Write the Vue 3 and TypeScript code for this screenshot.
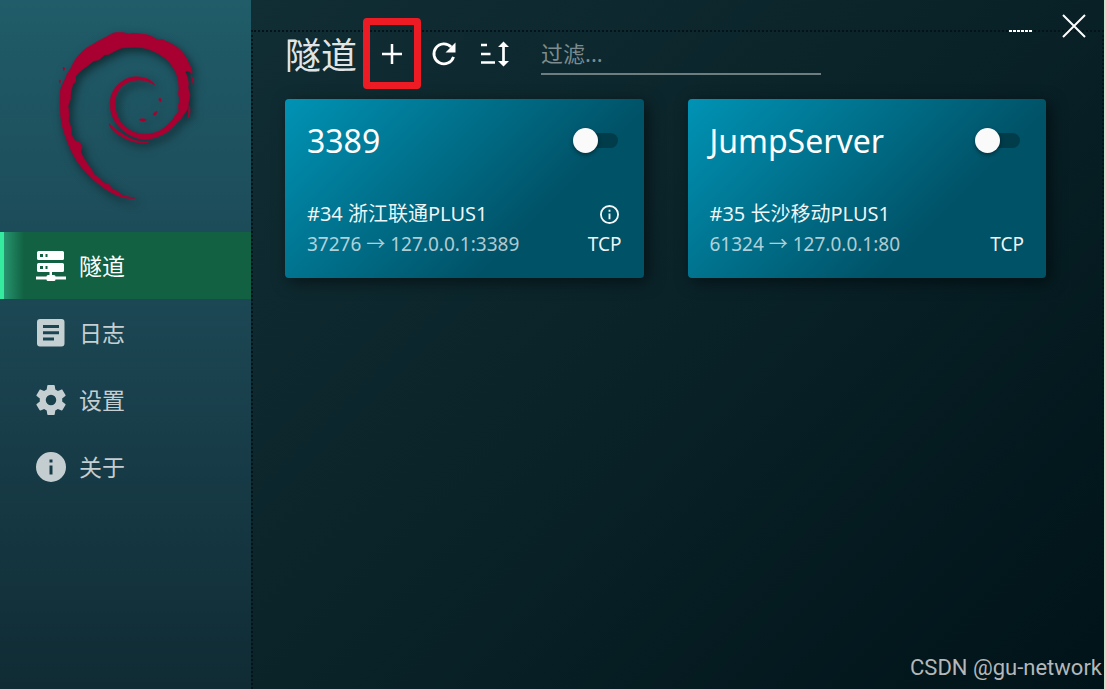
<script setup lang="ts">
import { ref } from 'vue'

interface NavItem {
  id: string
  label: string
}

interface Tunnel {
  id: number
  name: string
  node: string
  route: string
  protocol: string
  info: boolean
  enabled: boolean
}

const navItems: NavItem[] = [
  { id: 'tunnel', label: '隧道' },
  { id: 'log', label: '日志' },
  { id: 'settings', label: '设置' },
  { id: 'about', label: '关于' },
]

const active = ref('tunnel')
const filter = ref('')

const tunnels = ref<Tunnel[]>([
  { id: 34, name: '3389', node: '#34 浙江联通PLUS1', route: '37276 → 127.0.0.1:3389', protocol: 'TCP', info: true, enabled: false },
  { id: 35, name: 'JumpServer', node: '#35 长沙移动PLUS1', route: '61324 → 127.0.0.1:80', protocol: 'TCP', info: false, enabled: false },
])
</script>

<template>
  <div class="window">
    <aside class="sidebar">
      <div class="brand">
        <svg class="swirl" viewBox="0 0 510 570" aria-hidden="true">
          <path d="M282 534C262 538 236 531 214 519C182 503 150 474 124 445C97 413 77 366 65 322C56 286 57 244 58 214C60 199 69 189 75 171C79 157 89 150 94 136C107 107 132 84 152 76C171 62 192 54 214 41C224 36 237 38 248 38L262 42L277 40L306 43C324 44 334 50 350 60L366 59C381 68 392 69 404 79C423 93 436 110 444 131C450 142 454 151 453 162C446 153 438 151 432 156C440 169 444 187 441 203L447 225C444 239 442 253 440 267C434 277 425 286 419 298C406 306 398 321 387 329C366 346 338 357 311 358C284 356 262 345 244 329C220 309 207 281 208 252C206 226 221 199 242 185C264 170 284 168 305 173C321 175 334 183 341 195C325 184 309 180 291 180C272 181 253 188 240 202C226 217 221 236 222 255C223 276 231 298 244 312C263 333 288 343 313 343C336 342 354 336 369 324C381 316 389 306 399 294C401 284 411 283 414 273L412 256L417 242L412 220C417 205 412 190 411 176C407 158 397 141 385 127C367 107 344 96 321 87C300 80 269 81 241 84L221 93L204 103L190 105L174 119L158 123L136 140C124 147 112 158 103 170L104 184L95 194L90 214L88 238L81 257L84 282L83 303L90 323L91 345L103 363L116 367L123 381L119 395L126 411L139 431L151 447L160 465L175 474L188 488L202 493L215 508L232 515L242 525C255 530 270 532 282 534Z" />
          <path d="M204 311C215 320 226 330 240 339C268 358 293 368 323 366C294 374 261 362 238 347C219 337 208 325 204 311ZM295 299C302 294 309 296 316 300C309 306 300 304 295 299ZM354 235C360 234 363 240 360 245C355 246 353 241 354 235ZM338 280L347 274C350 281 343 289 337 284ZM66 142L72 145L68 152ZM54 182L58 180L57 190ZM450 165C455 174 459 188 458 198ZM444 258C449 268 448 282 442 293C440 300 443 270 444 258Z" />
        </svg>
      </div>
      <nav>
        <a
          v-for="item in navItems"
          :key="item.id"
          class="nav-item"
          :class="{ active: active === item.id }"
          :href="'#' + item.id"
          @click="active = item.id"
        >
          <svg v-if="item.id === 'tunnel'" class="nav-icon" viewBox="0 0 30 30" aria-hidden="true">
            <path fill-rule="evenodd" d="M2.500 0h24a1.500 1.500 0 0 1 1.500 1.500v6a1.500 1.500 0 0 1-1.500 1.500h-24A1.500 1.500 0 0 1 1 7.500v-6A1.500 1.500 0 0 1 2.500 0ZM4 3v3h3V3ZM9.500 3v3h2V3ZM2.500 12h24a1.500 1.500 0 0 1 1.500 1.500v6a1.500 1.500 0 0 1-1.500 1.500H16v3h2a1.500 1.500 0 0 1 1.500 1.500H30v3H19.500A1.500 1.500 0 0 1 18 30h-6a1.500 1.500 0 0 1-1.500-1.500H0v-3h10.500A1.500 1.500 0 0 1 12 24h1.500v-3h-11A1.500 1.500 0 0 1 1 19.500v-6A1.500 1.500 0 0 1 2.500 12ZM4 15v3h3v-3ZM9.500 15v3h2v-3Z" />
          </svg>
          <svg v-else-if="item.id === 'log'" class="nav-icon" viewBox="0 0 30 30" aria-hidden="true">
            <path fill-rule="evenodd" d="M4 1h21.500a3 3 0 0 1 3 3v21.500a3 3 0 0 1-3 3H4a3 3 0 0 1-3-3V4a3 3 0 0 1 3-3ZM7 7v3h16V7ZM7 13.200v3h16v-3ZM7 19.500v3h11v-3Z" />
          </svg>
          <svg v-else-if="item.id === 'settings'" class="nav-icon" viewBox="2 2 20 20" aria-hidden="true">
            <path d="M12 15.500A3.500 3.500 0 0 1 8.500 12 3.500 3.500 0 0 1 12 8.500a3.500 3.500 0 0 1 3.500 3.500 3.500 3.500 0 0 1-3.500 3.500m7.430-2.530c.04-.32.07-.64.07-.97s-.03-.66-.07-1l2.110-1.630c.19-.15.24-.42.12-.64l-2-3.460c-.12-.22-.39-.31-.61-.22l-2.490 1c-.52-.39-1.060-.73-1.690-.98l-.37-2.650A.506.506 0 0 0 14 2h-4c-.25 0-.46.180-.5.420l-.37 2.650c-.63.250-1.170.590-1.690.980l-2.490-1c-.22-.09-.49 0-.61.220l-2 3.460c-.13.220-.07.490.12.640L4.570 11c-.04.340-.07.670-.07 1s.03.650.07.970l-2.110 1.660c-.19.150-.25.420-.12.640l2 3.460c.12.220.39.300.61.220l2.490-1.010c.52.400 1.060.740 1.690.990l.37 2.650c.04.240.25.420.5.420h4c.25 0 .46-.18.5-.42l.37-2.650c.63-.26 1.170-.59 1.690-.99l2.490 1.010c.22.080.49 0 .61-.22l2-3.460c.12-.22.07-.49-.12-.64l-2.110-1.660Z" />
          </svg>
          <svg v-else class="nav-icon" viewBox="2 2 20 20" aria-hidden="true">
            <path d="M13 9h-2V7h2m0 10h-2v-6h2m-1-9A10 10 0 0 0 2 12a10 10 0 0 0 10 10 10 10 0 0 0 10-10A10 10 0 0 0 12 2Z" />
          </svg>
          <span>{{ item.label }}</span>
        </a>
      </nav>
    </aside>

    <main class="main">
      <section class="content">
        <header class="toolbar">
          <h1>隧道</h1>
          <button class="tool marked" type="button" aria-label="新建">
            <svg viewBox="0 0 30 30" aria-hidden="true"><path d="M5 15H25M15 5V25" stroke-width="2.500" /></svg>
          </button>
          <button class="tool" type="button" aria-label="刷新">
            <svg viewBox="0 0 30 30" aria-hidden="true">
              <path d="M24.500 17.800A10 10 0 1 1 22.200 8" stroke-width="2.800" />
              <path class="solid" d="M26.500 3.500V13.500H16.500Z" />
            </svg>
          </button>
          <button class="tool" type="button" aria-label="排序">
            <svg viewBox="0 0 30 30" aria-hidden="true">
              <path d="M0 6H6M0 15H9.500M0 23.500H14M22.500 6V24" stroke-width="2.700" />
              <path class="solid" d="M22.500 2.500 28 8H17ZM22.500 27.500 17 22H28Z" />
            </svg>
          </button>
          <input v-model="filter" class="filter" type="text" placeholder="过滤..." aria-label="过滤" />
        </header>

        <div class="cards">
          <article v-for="tunnel in tunnels" :key="tunnel.id" class="card">
            <div class="card-head">
              <h2>{{ tunnel.name }}</h2>
              <input v-model="tunnel.enabled" class="switch" type="checkbox" role="switch" :aria-label="tunnel.name" />
            </div>
            <div class="row node">
              <span>{{ tunnel.node }}</span>
              <button v-if="tunnel.info" class="info" type="button" aria-label="详情">
                <svg viewBox="2 2 20 20" aria-hidden="true">
                  <path d="M11 9h2V7h-2m1 13c-4.410 0-8-3.590-8-8s3.590-8 8-8 8 3.590 8 8-3.590 8-8 8m0-18A10 10 0 0 0 2 12a10 10 0 0 0 10 10 10 10 0 0 0 10-10A10 10 0 0 0 12 2m-1 15h2v-6h-2v6Z" />
                </svg>
              </button>
            </div>
            <div class="row">
              <span class="route">{{ tunnel.route }}</span>
              <span>{{ tunnel.protocol }}</span>
            </div>
          </article>
        </div>
      </section>

      <div class="window-controls">
        <button type="button" aria-label="最小化">
          <svg viewBox="0 0 24 24" aria-hidden="true"><path d="M0 17H24" stroke-width="2" stroke-dasharray="3 1" /></svg>
        </button>
        <button type="button" aria-label="关闭">
          <svg viewBox="0 0 24 24" aria-hidden="true"><path d="M1 1 23 23M23 1 1 23" stroke-width="2" /></svg>
        </button>
      </div>
      <div class="watermark">CSDN @gu-network</div>
    </main>
  </div>
</template>

<style>
body {
  margin: 0;
}
</style>

<style scoped>
.window {
  display: grid;
  grid-template-columns: 251px 1fr;
  min-height: 100vh;
  box-sizing: border-box;
  border-right: 2px solid #c8e4cd;
  color: #fff;
  font-family: "Noto Sans", "Noto Sans CJK SC", sans-serif;
}

button {
  display: grid;
  place-items: center;
  padding: 0;
  border: 0;
  background: none;
  color: inherit;
  cursor: pointer;
}

.sidebar {
  background: linear-gradient(180deg, #205c69 0%, #1c4855 42%, #102b34 100%);
}

.brand {
  display: flex;
  justify-content: center;
  box-sizing: border-box;
  height: 232px;
  padding-top: 20px;
}

.swirl {
  width: 170px;
  height: 190px;
  fill: #a80030;
  stroke: #a80030;
  stroke-width: 2;
  filter: drop-shadow(3px 4px 5px rgba(0, 0, 0, 0.5));
}

.nav-item {
  display: flex;
  align-items: center;
  gap: 13px;
  box-sizing: border-box;
  height: 67px;
  padding-left: 36px;
  color: rgba(255, 255, 255, 0.75);
  font-size: 23px;
  line-height: 30px;
  text-decoration: none;
}

.nav-item.active {
  color: #fff;
  background: linear-gradient(90deg, #35eb9f 0 4px, #26956f 4px, #116142 24px);
}

.nav-icon {
  width: 30px;
  height: 30px;
  fill: currentColor;
}

.main {
  position: relative;
  display: flex;
  flex-direction: column;
  padding-top: 30px;
  background: linear-gradient(135deg, #112e34 0%, #092228 50%, #001318 100%);
}

.content {
  flex: 1;
  padding: 0 56px 24px 32px;
  border: 2px dotted #02141a;
  border-bottom: 0;
}

.toolbar {
  display: flex;
  align-items: center;
  height: 44px;
  margin-bottom: 23px;
}

h1 {
  margin: 0 9px 0 0;
  padding-top: 3px;
  color: rgba(255, 255, 255, 0.9);
  font-size: 36px;
  font-weight: 400;
  line-height: 46px;
}

.tool {
  position: relative;
  width: 52px;
  height: 44px;
}

.tool svg {
  width: 30px;
  height: 30px;
  fill: none;
  stroke: #fff;
}

.tool .solid {
  fill: #fff;
  stroke: none;
}

.marked::after {
  position: absolute;
  inset: -14px -3px -13px -3px;
  border: 7px solid #ed1c24;
  border-radius: 4px;
  content: "";
}

.filter {
  box-sizing: border-box;
  width: 280px;
  height: 42px;
  margin-left: 19px;
  padding: 0;
  border: 0;
  border-bottom: 2px solid #6d7d80;
  outline: 0;
  background: none;
  color: #fff;
  font: inherit;
  font-size: 22px;
}

.filter::placeholder {
  color: #7c8c8f;
  opacity: 1;
}

.cards {
  display: grid;
  grid-template-columns: 1fr 1fr;
  gap: 44px;
}

.card {
  padding: 22px 22px 19px;
  border-radius: 4px;
  background: linear-gradient(135deg, #0093b5 0%, #005267 69%, #005267 100%);
  box-shadow: 4px 4px 16px rgba(0, 0, 0, 0.5);
}

.card-head {
  display: flex;
  align-items: center;
  justify-content: space-between;
  height: 40px;
  margin-bottom: 38px;
}

h2 {
  margin: 0;
  font-size: 32px;
  font-weight: 400;
  line-height: 40px;
}

.switch {
  appearance: none;
  display: flex;
  align-items: center;
  width: 41px;
  height: 15px;
  margin: 0 4px 2px 0;
  border-radius: 8px;
  background: #003c4a;
  cursor: pointer;
}

.switch::before {
  width: 25px;
  height: 25px;
  flex: none;
  margin-left: -4px;
  border-radius: 50%;
  background: #fafafa;
  box-shadow: 0 2px 4px rgba(0, 0, 0, 0.4);
  content: "";
}

.switch:checked::before {
  margin-left: 20px;
}

.row {
  display: flex;
  align-items: center;
  justify-content: space-between;
  height: 30px;
  color: rgba(255, 255, 255, 0.95);
  font-size: 19px;
  line-height: 30px;
}

.node {
  font-size: 20px;
}

.route {
  color: rgba(255, 255, 255, 0.7);
}

.info {
  width: 24px;
  height: 24px;
}

.info svg {
  width: 19px;
  height: 19px;
  fill: currentColor;
}

.window-controls {
  position: absolute;
  top: 0;
  right: 4px;
  display: flex;
}

.window-controls button {
  width: 53px;
  height: 52px;
}

.window-controls svg {
  width: 24px;
  height: 24px;
  fill: none;
  stroke: #fff;
}

.watermark {
  position: absolute;
  right: 2px;
  bottom: 4px;
  color: #b4b8ba;
  font-family: Roboto, sans-serif;
  font-size: 22px;
  line-height: 34px;
}
</style>
